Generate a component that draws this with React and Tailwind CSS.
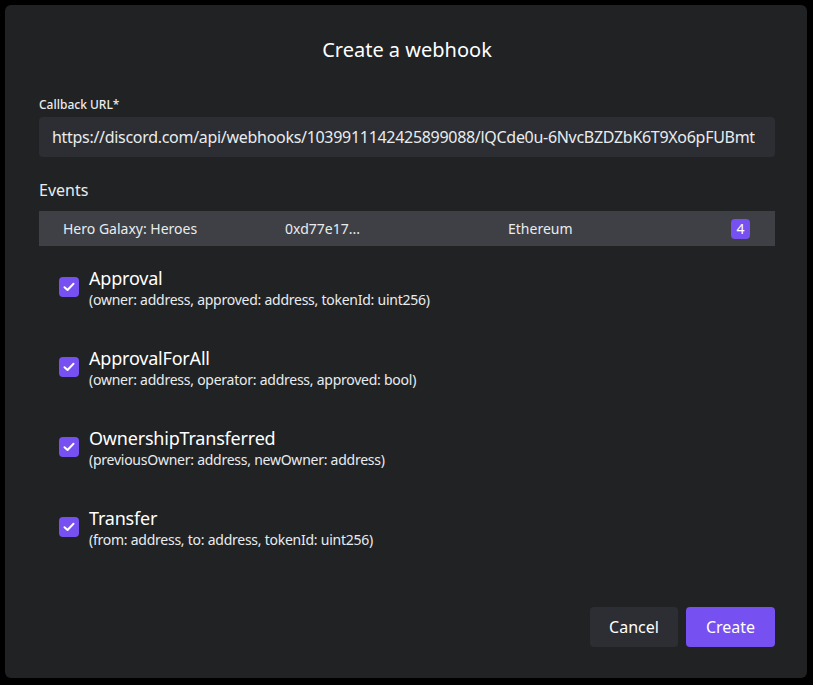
const events = [
    { name: "Approval", args: "(owner: address, approved: address, tokenId: uint256)" },
    { name: "ApprovalForAll", args: "(owner: address, operator: address, approved: bool)" },
    { name: "OwnershipTransferred", args: "(previousOwner: address, newOwner: address)" },
    { name: "Transfer", args: "(from: address, to: address, tokenId: uint256)" },
];

const CheckBox = () => (
    <div className="flex items-center justify-center w-5 h-5 rounded bg-[#7650f0] shrink-0">
        <svg width="12" height="10" viewBox="0 0 12 10" fill="none">
            <path d="M1.5 5.2 4.5 8 10.5 1.8" stroke="white" strokeWidth="2" strokeLinecap="round" strokeLinejoin="round" />
        </svg>
    </div>
);

const App = () => {
    return (
        <div
            className="w-[813px] h-[685px] bg-black p-[5px] text-[#e9ecef]"
            style={{ fontFamily: '"Noto Sans", "Open Sans", sans-serif' }}
        >
            <div className="flex flex-col h-[673px] w-[802px] bg-[#212224] rounded-md pl-[34px] pr-[32px]">

                {/* Title */}
                <h2 className="mt-[30px] text-[20px] leading-[30px] text-center text-white">
                    Create a webhook
                </h2>

                {/* Callback URL */}
                <label className="mt-[31px] text-[12px] leading-[18px] font-medium">
                    Callback URL*
                </label>
                <div className="flex items-center h-[40px] mt-[3px] pl-[13px] pr-[12px] bg-[#2c2e33] rounded overflow-hidden">
                    <span className="text-[16px] whitespace-nowrap overflow-hidden tracking-[-0.3px] text-[#e9ecef]">
                        https://discord.com/api/webhooks/1039911142425899088/lQCde0u-6NvcBZDZbK6T9Xo6pFUBmt
                    </span>
                </div>

                {/* Events */}
                <p className="mt-[21px] text-[16px] leading-[24px]">Events</p>
                <div className="flex items-center h-[35px] mt-[9px] bg-[#3e4045] text-[14px]">
                    <span className="w-[246px] pl-[24px]">Hero Galaxy: Heroes</span>
                    <span className="w-[223px]">0xd77e17...</span>
                    <span className="flex-1">Ethereum</span>
                    <span className="flex items-center justify-center w-[19px] h-[20px] mr-[25px] rounded bg-[#7650f0] text-white text-[14px]">
                        4
                    </span>
                </div>

                <div className="flex flex-col gap-[36px] mt-[20px] pl-[20px]">
                    {events.map((e) => (
                        <div key={e.name} className="flex gap-[10px]">
                            <div className="pt-[11px]">
                                <CheckBox />
                            </div>
                            <div>
                                <p className="text-[18px] leading-[24px] tracking-[-0.2px] text-white">{e.name}</p>
                                <p className="text-[14px] leading-[20px] tracking-[-0.25px]">{e.args}</p>
                            </div>
                        </div>
                    ))}
                </div>

                {/* Buttons */}
                <div className="flex justify-end gap-[8px] mt-auto mb-[31px]">
                    <button className="h-[40px] w-[88px] rounded bg-[#2c2e33] text-[16px] text-white">
                        Cancel
                    </button>
                    <button className="h-[40px] w-[89px] rounded bg-[#7650f0] text-[16px] text-white">
                        Create
                    </button>
                </div>

            </div>
        </div>
    );
};

export default App;
